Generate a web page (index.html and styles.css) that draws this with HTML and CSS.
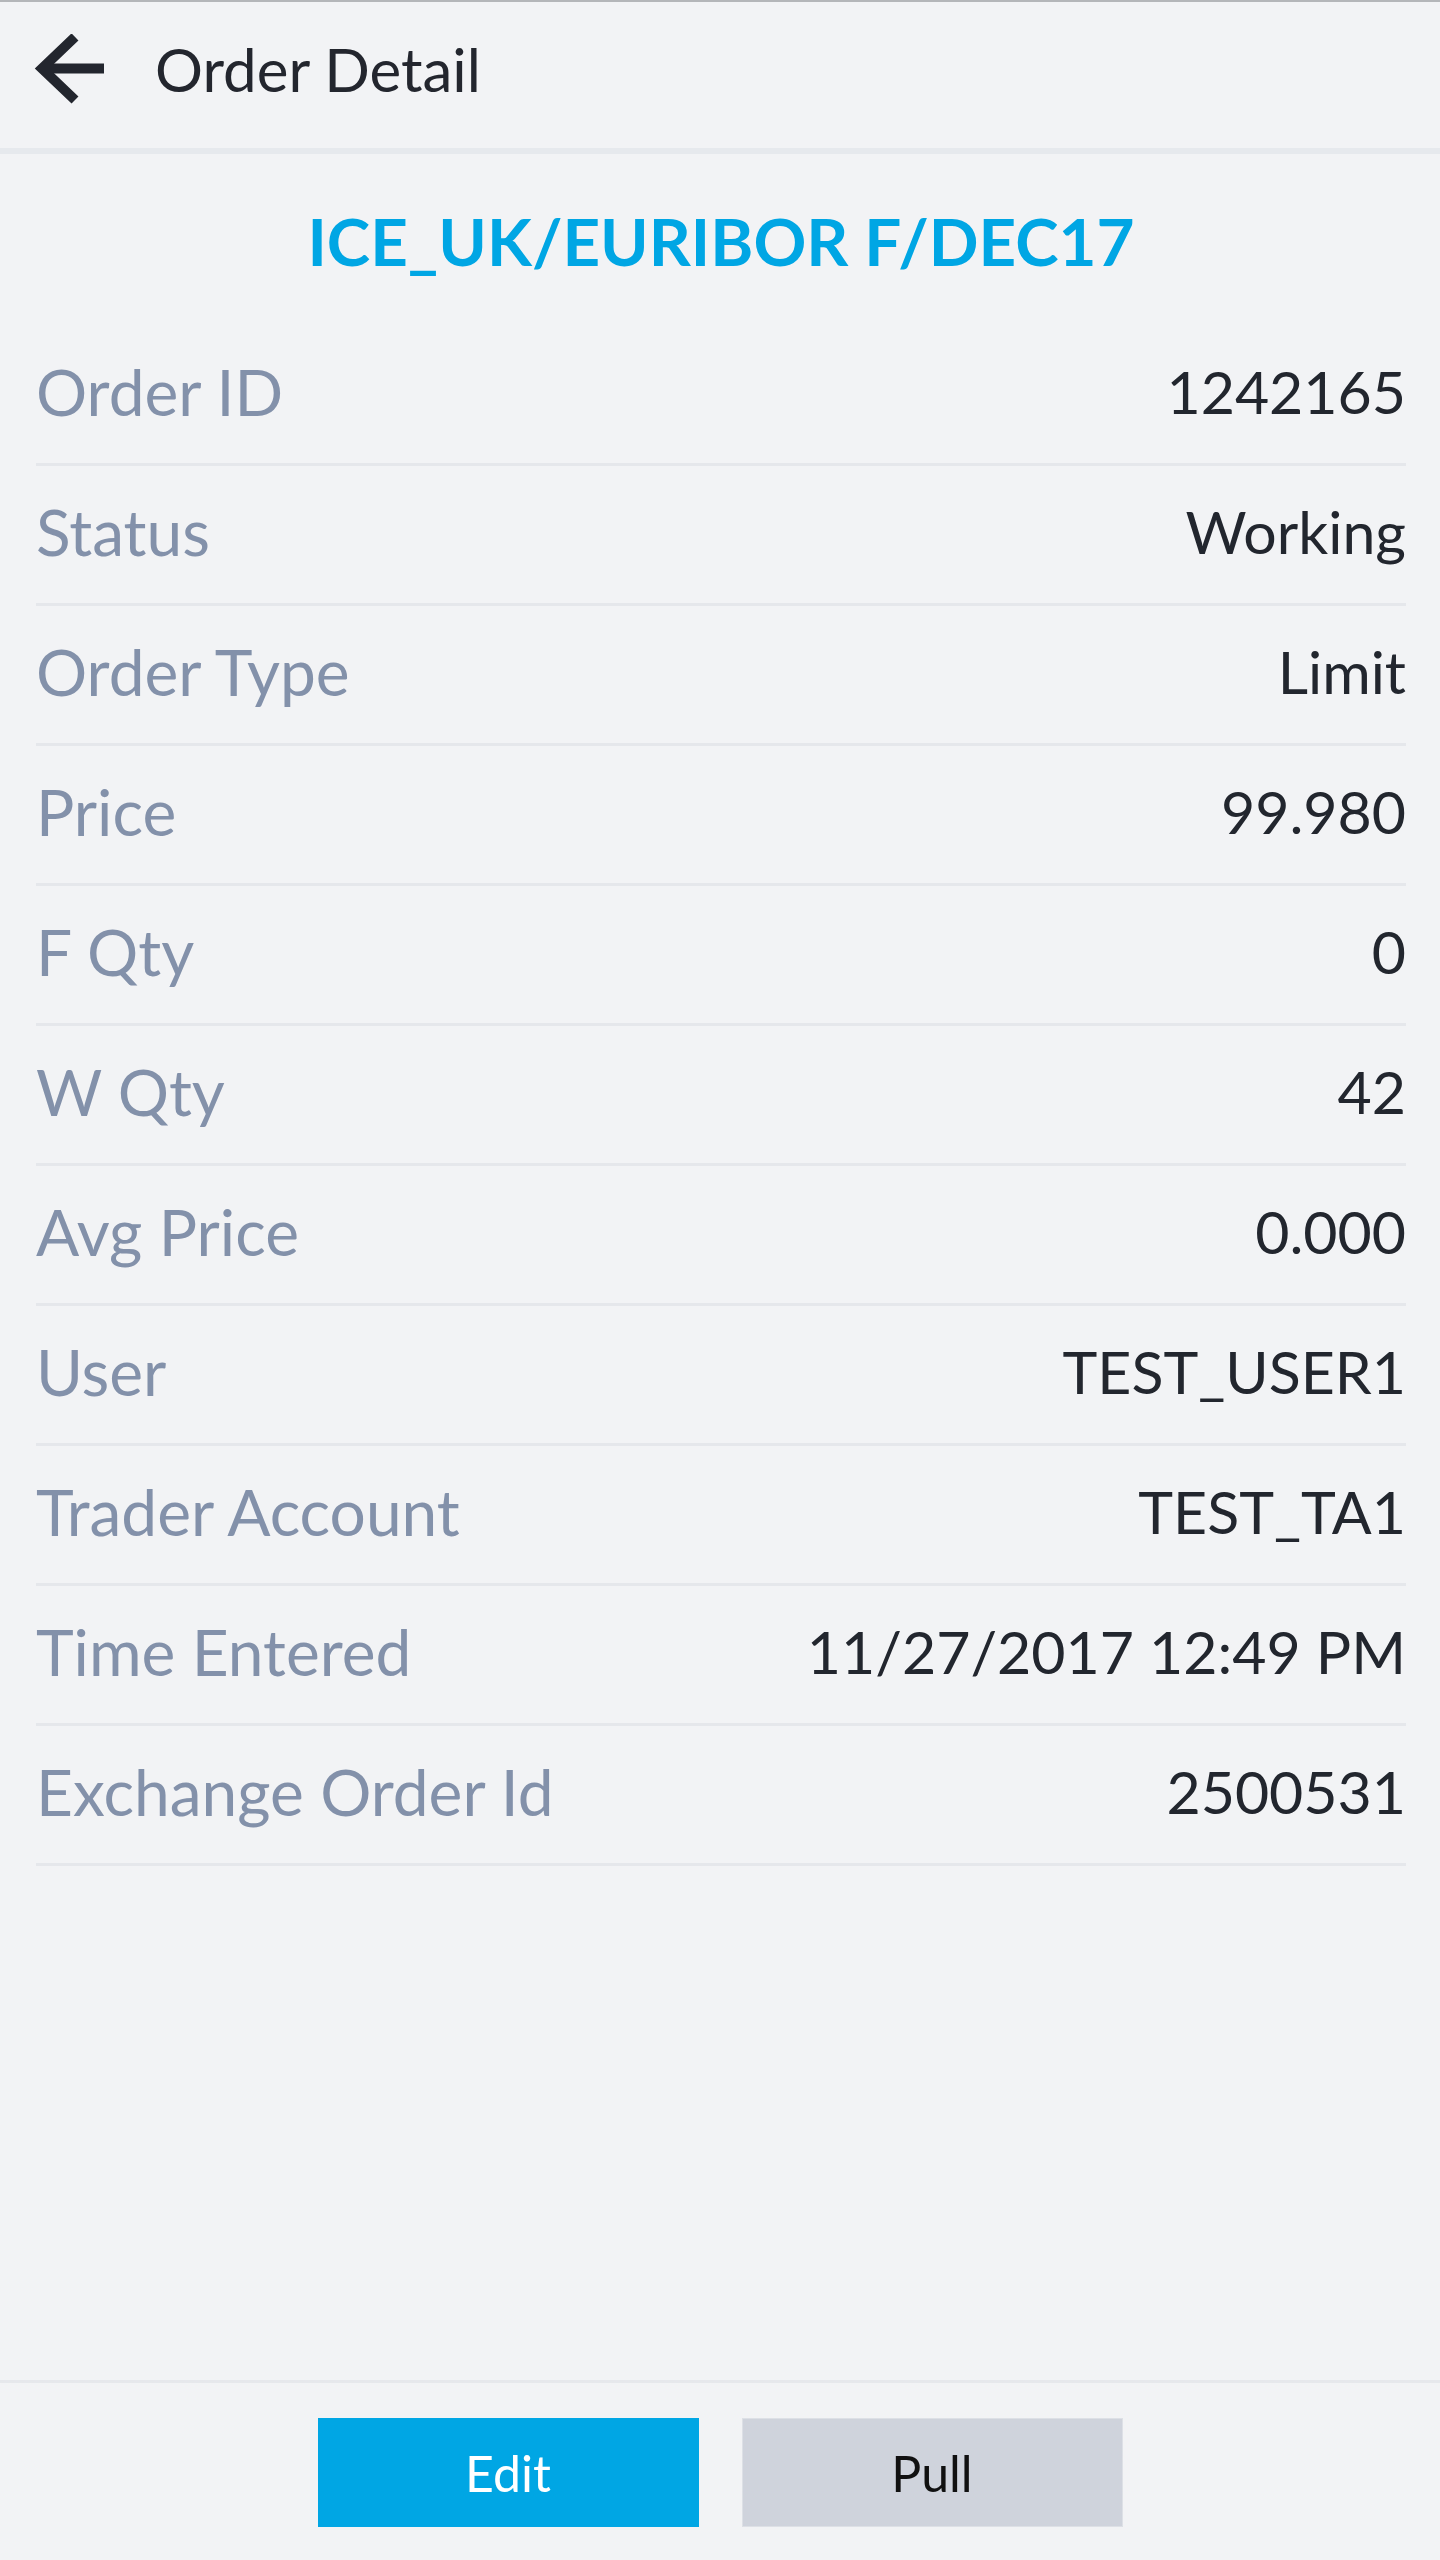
FILE: index.html
```html
<!DOCTYPE html>
<html>
<head lang="en">
    <meta charset="UTF-8">
    <title>Order Detail</title>
    <link rel="stylesheet" href="styles.css">
</head>
<body>
<div class="page">
    <!-- 顶部栏 -->
    <div class="topbar">
        <svg class="back" width="70" height="70" viewBox="0 0 70 70">
            <path d="M70 34.5H8" stroke="#23262e" stroke-width="10" fill="none"/>
            <path d="M41 3L8 34.5L41 66" stroke="#23262e" stroke-width="10" fill="none" stroke-linejoin="miter"/>
        </svg>
        <span class="topbar-title">Order Detail</span>
    </div>

    <!-- 订单信息 -->
    <div class="detail">
        <div class="instrument">ICE_UK/EURIBOR F/DEC17</div>
        <ul class="rows">
            <li><span class="label">Order ID</span><span class="value">1242165</span></li>
            <li><span class="label">Status</span><span class="value">Working</span></li>
            <li><span class="label">Order Type</span><span class="value">Limit</span></li>
            <li><span class="label">Price</span><span class="value">99.980</span></li>
            <li><span class="label">F Qty</span><span class="value">0</span></li>
            <li><span class="label">W Qty</span><span class="value">42</span></li>
            <li><span class="label">Avg Price</span><span class="value">0.000</span></li>
            <li><span class="label">User</span><span class="value">TEST_USER1</span></li>
            <li><span class="label">Trader Account</span><span class="value">TEST_TA1</span></li>
            <li><span class="label">Time Entered</span><span class="value">11/27/2017 12:49 PM</span></li>
            <li><span class="label">Exchange Order Id</span><span class="value">2500531</span></li>
        </ul>
    </div>

    <!-- 底部按钮 -->
    <div class="footer">
        <button class="btn btn-edit">Edit</button>
        <button class="btn btn-pull">Pull</button>
    </div>
</div>
</body>
</html>
```

FILE: styles.css
```css
body{
    margin: 0;
    background: #f2f3f5;
    font-family: Lato, "Liberation Sans", sans-serif;
    color: #23262e;
}
ul{
    list-style: none;
    margin: 0;
    padding: 0;
}
.page{
    min-height: 100vh;
    display: flex;
    flex-direction: column;
}
.topbar{
    height: 154px;
    border-top: 2px solid #b4b6b9;
    border-bottom: 6px solid #e6e9ed;
    padding: 0 0 12px 34px;
    box-sizing: border-box;
    display: flex;
    align-items: center;
}
.topbar .back{
    display: block;
    margin-right: 51px;
}
.topbar-title{
    font-size: 60px;
    color: #23262e;
}
.detail{
    flex: 1;
    padding: 0 34px 0 36px;
}
.instrument{
    height: 172px;
    display: flex;
    align-items: center;
    justify-content: center;
    font-size: 65.5px;
    font-weight: bold;
    color: #00a6e4;
}
.rows li{
    height: 131px;
    padding-bottom: 6px;
    border-bottom: 3px solid #e5e7eb;
    display: flex;
    align-items: center;
    justify-content: space-between;
}
.rows .label{
    font-size: 64px;
    color: #8391aa;
}
.rows .value{
    font-size: 59px;
    color: #22262e;
}
.footer{
    border-top: 3px solid #e6e8ec;
    padding: 35px 0 33px;
    display: flex;
    justify-content: center;
    gap: 43px;
}
.btn{
    width: 381px;
    height: 109px;
    border: none;
    font-family: Lato, "Liberation Sans", sans-serif;
    font-size: 50px;
    cursor: pointer;
}
.btn-edit{
    background: #00a6e4;
    color: #fff;
}
.btn-pull{
    background: #cfd3dc;
    border: 1px solid #dde0e6;
    color: #111;
}
```
